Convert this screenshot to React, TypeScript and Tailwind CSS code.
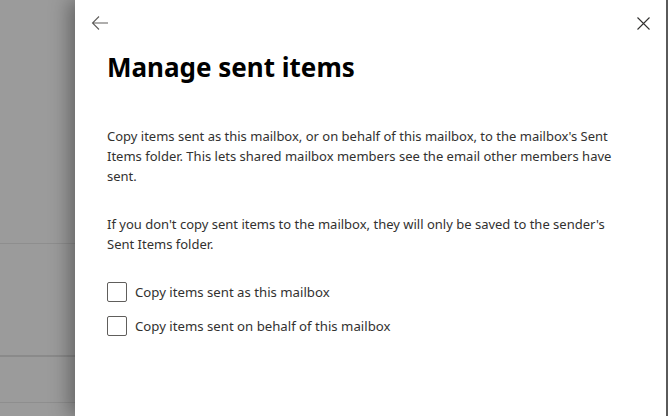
export default function App() {
  const font = { fontFamily: '"Segoe UI", "Noto Sans", "Open Sans", sans-serif' };

  return (
    <div className="flex h-[416px] w-[668px] overflow-hidden bg-[#9b9b9b]" style={font}>
      {/* dimmed page behind the panel */}
      <div className="flex w-[75px] shrink-0 flex-col">
        <div className="h-[244px] border-b border-[#8e8e8e]"></div>
        <div className="h-[113px] border-b-2 border-[#8a8a8a]"></div>
        <div className="h-[46px] border-b border-[#8e8e8e]"></div>
      </div>

      {/* side panel */}
      <div className="relative z-10 flex flex-1 bg-white shadow-[-6px_0_18px_rgba(0,0,0,0.35)]">
        <div className="flex flex-1 flex-col pl-[32px] pr-[30px] text-[#323130]">
          <div className="flex h-[46px] items-center justify-between">
            <button className="-ml-[22px] flex h-[30px] w-[30px] items-center justify-center text-[#605e5c]">
              <svg width="18" height="16" viewBox="0 0 18 16" fill="none" stroke="currentColor" strokeWidth="1.1">
                <path d="M17 8H1.5M8 1.5L1.5 8l6.5 6.5" />
              </svg>
            </button>
            <button className="-mr-[22px] flex h-[30px] w-[30px] items-center justify-center text-[#323130]">
              <svg width="13" height="13" viewBox="0 0 13 13" fill="none" stroke="currentColor" strokeWidth="1.1">
                <path d="M0.5 0.5l12 12M12.5 0.5l-12 12" />
              </svg>
            </button>
          </div>

          <h1 className="mt-[5px] text-[26px] font-bold leading-[32px] text-black">Manage sent items</h1>

          <p className="mt-[43px] whitespace-nowrap text-[13px] leading-[20px]">
            Copy items sent as this mailbox, or on behalf of this mailbox, to the mailbox's Sent
            <br />
            Items folder. This lets shared mailbox members see the email other members have
            <br />
            sent.
          </p>
          <p className="mt-[28px] whitespace-nowrap text-[13px] leading-[20px]">
            If you don't copy sent items to the mailbox, they will only be saved to the sender's
            <br />
            Sent Items folder.
          </p>

          <div className="mt-[28px] flex flex-col gap-[14px]">
            {["Copy items sent as this mailbox", "Copy items sent on behalf of this mailbox"].map((label) => (
              <label key={label} className="flex items-center gap-[8px] text-[13.2px] leading-[20px]">
                <span className="h-[20px] w-[20px] rounded-[2px] border border-[#605e5c] bg-white"></span>
                {label}
              </label>
            ))}
          </div>
        </div>
        <div className="w-[2px] bg-[#5a5a5a]"></div>
      </div>
    </div>
  );
}
